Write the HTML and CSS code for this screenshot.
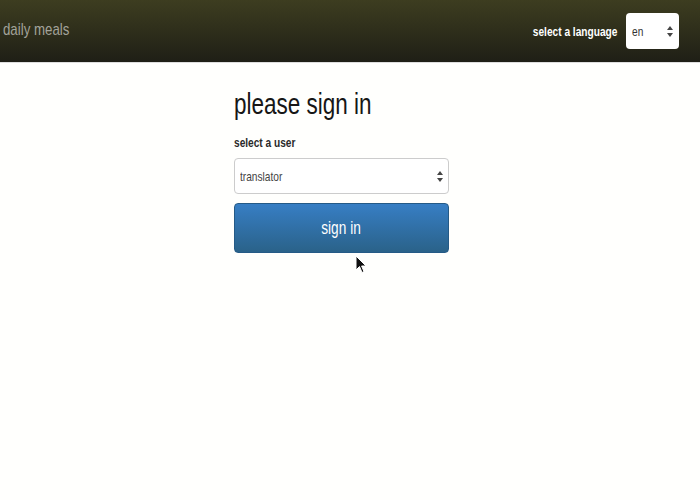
FILE: index.html
```html
<!DOCTYPE html>
<html>
<head>
<meta charset="utf-8">
<link rel="stylesheet" href="styles.css">
</head>
<body>
<header class="navbar">
  <a class="brand"><span class="sq">daily meals</span></a>
  <div class="lang">
    <label class="lang-label"><span class="sq sq-right">select a language</span></label>
    <div class="select lang-select"><span class="sq">en</span><svg class="arrows" width="6" height="11" viewBox="0 0 6 11"><path d="M3 0 L6 4 L0 4 Z M0 7 L6 7 L3 11 Z" fill="#444"/></svg></div>
  </div>
</header>
<main class="content">
  <div class="form">
    <h1 class="title"><span class="sq sq-title">please sign in</span></h1>
    <label class="field-label"><span class="sq">select a user</span></label>
    <div class="select user-select"><span class="sq">translator</span><svg class="arrows" width="6" height="11" viewBox="0 0 6 11"><path d="M3 0 L6 4 L0 4 Z M0 7 L6 7 L3 11 Z" fill="#444"/></svg></div>
    <button class="btn"><span class="sq sq-center">sign in</span></button>
  </div>
</main>
<svg class="cursor" width="12" height="19" viewBox="0 0 12 19"><path d="M1 1 L1 15 L4.5 11.5 L7 17.5 L9 16.6 L6.6 11 L11 11 Z" fill="#111" stroke="#fff" stroke-width="1"/></svg>
</body>
</html>
```
FILE: styles.css
```css
html, body { margin: 0; padding: 0; }
body {
  background: #fffffd;
  font-family: "Liberation Sans", Arial, sans-serif;
  width: 700px;
  height: 500px;
  position: relative;
  overflow: hidden;
}
.sq {
  display: inline-block;
  transform: scaleX(0.78);
  transform-origin: left center;
  white-space: nowrap;
}
.sq-title { transform: scaleX(0.75); }
.sq-right { transform-origin: right center; }
.sq-center { transform-origin: center center; transform: scaleX(0.76); }
.navbar {
  height: 62px;
  background: linear-gradient(#3d3d20, #1f1f16);
  display: flex;
  align-items: center;
  justify-content: space-between;
  padding: 0 21px 0 3px;
  border-bottom: 1px solid #dedede;
}
.brand {
  color: #a3a39a;
  font-size: 17px;
  margin-top: -2px;
}
.lang { display: flex; align-items: center; gap: 9px; }
.lang-label {
  color: #fff;
  font-weight: bold;
  font-size: 13px;
}
.select {
  background: #fff;
  border-radius: 4px;
  display: flex;
  align-items: center;
  justify-content: space-between;
  color: #333;
  box-sizing: border-box;
}
.arrows { flex: none; }
.lang-select {
  width: 53px;
  height: 36px;
  padding: 0 6px 0 6px;
  font-size: 13px;
}
.content { display: flex; justify-content: center; padding-right: 18px; }
.form { width: 215px; display: flex; flex-direction: column; }
.title {
  margin: 23px 0 0;
  font-size: 30px;
  font-weight: normal;
  color: #161616;
  line-height: 36px;
}
.field-label {
  margin-top: 13px;
  font-size: 13px;
  font-weight: bold;
  color: #2a2a2a;
}
.user-select {
  margin-top: 8px;
  height: 36px;
  border: 1px solid #ccc;
  padding: 0 5px;
  font-size: 13px;
  color: #444;
}
.btn {
  margin-top: 9px;
  height: 50px;
  border: 1px solid #255a86;
  border-radius: 4px;
  background: linear-gradient(#377ec4, #2a6289);
  color: #fff;
  font-family: "Liberation Sans", Arial, sans-serif;
  font-size: 18px;
  padding: 0;
}
.cursor { position: absolute; left: 355px; top: 255px; }
```
